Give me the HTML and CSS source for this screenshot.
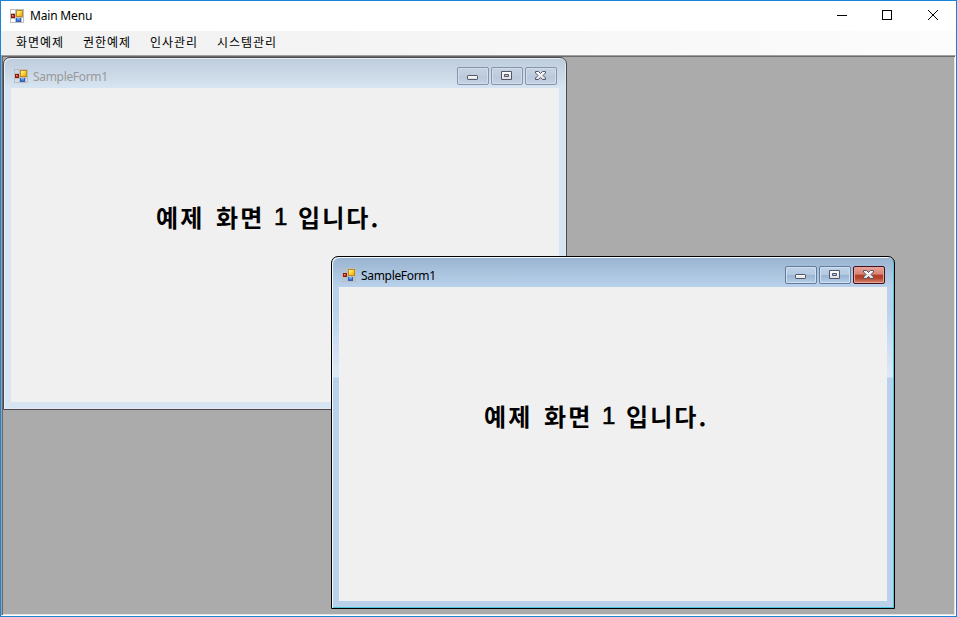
FILE: index.html
```html
<!DOCTYPE html>
<html lang="ko">
<head>
<meta charset="utf-8">
<title>Main Menu</title>
<link rel="stylesheet" href="styles.css">
</head>
<body>
<svg class="defs" width="0" height="0" aria-hidden="true">
  <defs>
    <linearGradient id="gold" x2="1" y2="1"><stop offset="0" stop-color="#fff2a0"/><stop offset=".5" stop-color="#ffd338"/><stop offset="1" stop-color="#eaa600"/></linearGradient>
    <linearGradient id="blue" x2="0" y2="1"><stop offset="0" stop-color="#8fbaff"/><stop offset="1" stop-color="#286bd2"/></linearGradient>
    <linearGradient id="glyph" x2="0" y2="1"><stop offset="0" stop-color="#fff"/><stop offset="1" stop-color="#ddd"/></linearGradient>
    <symbol id="form-icon" viewBox="0 0 14 14">
      <path fill="#bdbdbd" fill-rule="evenodd" d="M0 0h14v14H0zM1 1v3h4V1zM1 10v3h4v-3zM12 9v4h1V9z"/>
      <path fill="#b98d20" d="M6 1h7v7H6z"/><path fill="url(#gold)" d="M7 2h5v5H7z"/>
      <path fill="#8c1713" d="M1 5h4v4H1z"/><path fill="#d63d2e" d="M2 6h2v2H2z"/><path fill="#f0a090" d="M2 6h1v1H2z"/>
      <path fill="#3260b4" d="M6 9h5v4H6z"/><path fill="url(#blue)" d="M7 9h3v3H7z"/>
    </symbol>
    <symbol id="min" viewBox="0 0 32 18"><rect x="10.5" y="8.5" width="10" height="4" rx=".6" fill="url(#glyph)" stroke="#50566b"/></symbol>
    <symbol id="max" viewBox="0 0 32 18"><path d="M10.5 4.5h10v8h-10zM13.5 7.5v2h4v-2z" fill="url(#glyph)" fill-rule="evenodd" stroke="#50566b"/></symbol>
    <symbol id="close" viewBox="0 0 32 18"><path d="M10.5 4.5h3l2 2 2-2h3v1.5L18 8.5l2.500 2.500v1.500h-3l-2-2-2 2h-3V11L13 8.500 10.500 6z" fill="url(#glyph)" stroke="#50566b"/></symbol>
  </defs>
</svg>
<div class="app">
  <header class="titlebar">
    <svg class="app-icon"><use href="#form-icon"/></svg>
    <span class="app-title">Main Menu</span>
    <svg class="controls" width="104" height="12" viewBox="0 0 104 12" shape-rendering="crispEdges">
      <path d="M1 5.500h10M46.500 .5h9v9h-9z" fill="none" stroke="#000"/>
      <path d="M92 0l10 10M102 0L92 10" fill="none" stroke="#000" shape-rendering="auto"/>
    </svg>
  </header>
  <nav class="menu"><span>화면예제</span><span>권한예제</span><span>인사관리</span><span>시스템관리</span></nav>
  <main class="desktop">
    <section class="win inactive">
      <div class="caption">
        <svg class="win-icon"><use href="#form-icon"/></svg><span class="win-title">SampleForm1</span>
        <div class="buttons"><i class="btn"><svg><use href="#min"/></svg></i><i class="btn"><svg><use href="#max"/></svg></i><i class="btn close"><svg><use href="#close"/></svg></i></div>
      </div>
      <div class="client"><p class="message"><span class="two">예제</span><span class="two">화면</span><span class="one">1</span><span>입니다.</span></p></div>
    </section>
    <section class="win active">
      <div class="caption">
        <svg class="win-icon"><use href="#form-icon"/></svg><span class="win-title">SampleForm1</span>
        <div class="buttons"><i class="btn"><svg><use href="#min"/></svg></i><i class="btn"><svg><use href="#max"/></svg></i><i class="btn close"><svg><use href="#close"/></svg></i></div>
      </div>
      <div class="client"><p class="message"><span class="two">예제</span><span class="two">화면</span><span class="one">1</span><span>입니다.</span></p></div>
    </section>
  </main>
</div>
</body>
</html>
```
FILE: styles.css
```css
* { box-sizing: border-box; }
body { margin: 0; overflow: hidden; font: 12px "Noto Sans", "Noto Sans CJK KR", sans-serif; color: #000; }
.defs { position: absolute; }
.app { width: 957px; height: 617px; border: 1px solid #1883d7; display: flex; flex-direction: column; background: #fff; }
.titlebar { height: 30px; flex: none; display: flex; align-items: center; padding: 0 16px 0 9px; }
.app-icon { width: 14px; height: 14px; }
.app-title { margin-left: 6px; letter-spacing: -.18px; line-height: 16px; }
.controls { margin-left: auto; }
.menu { height: 24px; flex: none; display: flex; padding-left: 15px; background: linear-gradient(90deg, #f0f0f0, #fcfcfc); font-family: "Noto Sans CJK KR", sans-serif; line-height: 22px; letter-spacing: .96px; }
.menu span { width: 67px; white-space: nowrap; }
.desktop { flex: 1; position: relative; background: #ababab; border: 1px solid; border-color: #a0a0a0 #fff #fff #a0a0a0; box-shadow: inset 1px 1px #696969, inset -1px -1px #e3e3e3; }
.win { position: absolute; width: 564px; height: 353px; padding: 0 7px 7px; border: 1px solid #4b484f; border-radius: 7px 7px 0 0; display: flex; flex-direction: column; }
.inactive { left: 1px; top: 1px; background: linear-gradient(#bdccdb, #d7e4f2 30px); box-shadow: inset 1px 1px #e8eff7, inset -1px -1px #e2e8f0; }
.active { left: 329px; top: 200px; border-color: #000; background: linear-gradient(#99b4d1, #b9d1ea 30px, #b9d1ea 50px, #dce9f7 118px, #dce9f7 120px, #b9d1ea 121px); box-shadow: inset 1px 1px #f5faff, inset -1px -1px #4cc5dc; }
.caption { height: 30px; flex: none; display: flex; align-items: center; padding: 6px 2px 0 3px; }
.win-icon { width: 14px; height: 14px; }
.win-title { margin: 2px 0 0 5px; line-height: 16px; letter-spacing: -.32px; }
.inactive .win-title { color: #999; }
.buttons { margin: 3px 0 0 auto; display: flex; gap: 2px; align-self: flex-start; }
.btn { width: 32px; height: 18px; border: 1px solid #8493ae; border-radius: 2px; box-shadow: inset 0 0 0 1px #d3deea; background: linear-gradient(#c5d2e0, #becddd 50%, #b8c8da 50%, #c5d4e3); }
.btn svg { display: block; width: 32px; height: 18px; margin: -1px; }
.active .btn { border-color: #647b9b; box-shadow: inset 0 0 0 1px #d0e0f1; background: linear-gradient(#bfd3e8, #b2c9e1 50%, #98b4d2 50%, #b5cde7); }
.active .btn.close { border-color: #43101b; box-shadow: inset 0 0 0 1px #e4a49c; background: linear-gradient(#e6a398, #d98272 45%, #b63d25 50%, #b5442b 70%, #d58a71); }
.client { flex: 1; background: #f0f0f0; padding: 111px 0 0 145px; }
.message { margin: 0; display: flex; font: bold 24px/36px "Noto Sans CJK KR", sans-serif; letter-spacing: 2.1px; white-space: nowrap; }
.two { width: 60px; }
.one { width: 22px; text-indent: -2px; font-family: "Liberation Sans", sans-serif; font-weight: normal; -webkit-text-stroke: .6px #000; }
```
